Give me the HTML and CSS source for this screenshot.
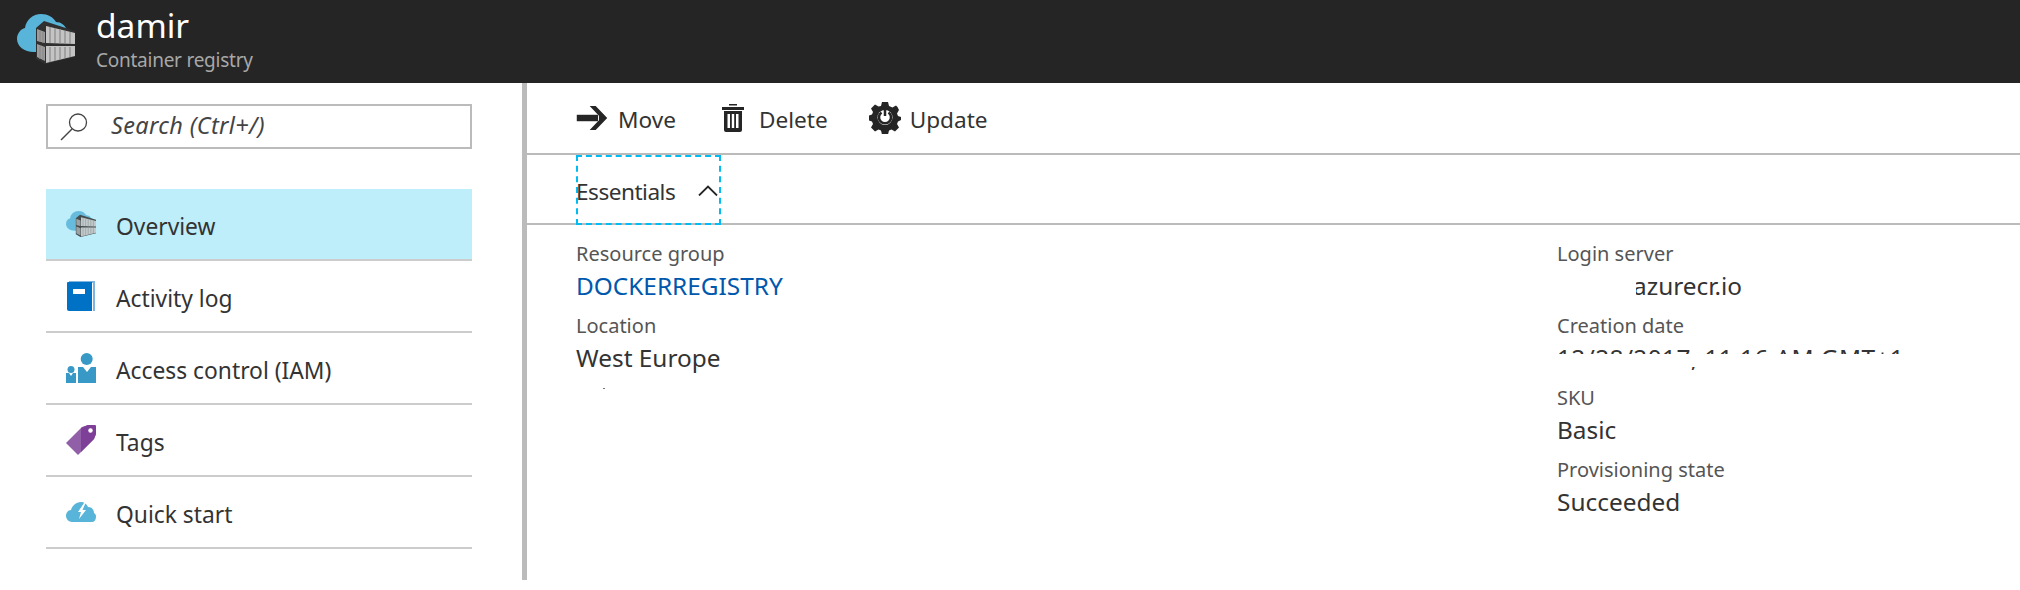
FILE: index.html
```html
<!DOCTYPE html>
<html lang="en">
<head>
<meta charset="utf-8">
<title>damir - Container registry</title>
<link rel="stylesheet" href="styles.css">
</head>
<body>
<svg class="defs" width="0" height="0" aria-hidden="true">
  <defs>
    <symbol id="registry" viewBox="0 0 58 50">
      <path fill="#59b4d9" d="M17 38C7 38 0 32 0 25c0-6 4-10 8-11C9 6 16 0 24 0c7 0 12 3 15 8 5 0 9 3 11 8v22z"/>
      <path fill="#303030" d="M19 14 27 7 58 17V43L28 50 19 45z"/>
      <path fill="#9c9c9c" d="M20 15l8 3v11l-8-2zM20 30l8 3v14l-8-4z"/>
      <path fill="#c4c4c4" d="M29 12l29 7v11l-29-1zM29 32h29v10l-29 7z"/>
      <path fill="none" stroke="#8a8a8a" stroke-width="1.200" d="M33 13v16M38 14v15M43 15v15M48 17v13M53 18v12M33 33v15M38 33v14M43 33v13M48 33v11M53 33v10M23 17v11M26 18v11M23 32v13M26 33v13"/>
    </symbol>
  </defs>
</svg>

<header class="topbar">
  <svg class="brand-icon"><use href="#registry"/></svg>
  <div class="brand-text">
    <h1 class="brand-name">damir</h1>
    <p class="brand-type">Container registry</p>
  </div>
</header>

<div class="shell">
  <nav class="sidebar">
    <div class="search">
      <svg class="search-icon" viewBox="0 0 28 28"><circle cx="18" cy="9.500" r="8.500" fill="none" stroke="#444" stroke-width="1.300"/><path d="M12 16 1 27" fill="none" stroke="#444" stroke-width="1.400"/></svg>
      <span class="search-text">Search (Ctrl+/)</span>
    </div>
    <ul class="menu">
      <li class="menu-item active">
        <span class="menu-icon"><svg class="icon-faded"><use href="#registry"/></svg></span>
        <span class="item-label">Overview</span>
      </li>
      <li class="menu-item">
        <span class="menu-icon"><svg viewBox="0 0 30 30"><path fill="#7fb5e0" d="M3 0h26v30h-2V2H3z"/><path fill="#0072c6" d="M2 1h24v29H3a2 2 0 0 1-2-2V2a1 1 0 0 1 1-1z"/><path fill="#fff" d="M7 8h12v5H7z"/></svg></span>
        <span class="item-label">Activity log</span>
      </li>
      <li class="menu-item">
        <span class="menu-icon"><svg viewBox="0 0 30 30"><g fill="#3999c6"><circle cx="20.700" cy="6" r="6"/><path d="M12 14h5l4 5 4-5h5v16H12z"/><circle cx="5" cy="16.600" r="3.500"/><path d="M0 20h3l2 3 2-3h3v10H0z"/></g></svg></span>
        <span class="item-label">Access control (IAM)</span>
      </li>
      <li class="menu-item">
        <span class="menu-icon"><svg viewBox="0 0 30 30"><path fill="#915fa8" d="M0 18 16 2l6-2h7l1 1v8l-2 5-16 16z"/><path fill="#7e3f98" d="M15 3l7-3h7l1 1v8l-2 5-13 13z"/><circle cx="24.500" cy="5.500" r="2.200" fill="#fff"/></svg></span>
        <span class="item-label">Tags</span>
      </li>
      <li class="menu-item">
        <span class="menu-icon"><svg viewBox="0 0 30 20"><path fill="#59b4d9" d="M6 20a6 6 0 0 1-6-6c0-3 2-6 5-6 1-4 5-8 10-8 3 0 6 2 7 5 4 0 6 3 6 6 2 1 2 3 2 4 0 3-2 5-4 5z"/><path fill="#fff" d="M18 1l-6 9h3l-2 7 7-9h-3.500l3-7z"/></svg></span>
        <span class="item-label">Quick start</span>
      </li>
    </ul>
  </nav>

  <main class="content">
    <div class="commands">
      <button class="command">
        <svg class="cmd-icon cmd-move" viewBox="0 0 33 26"><path fill="#252525" d="M0 9.500h23V16.500H0z"/><path fill="#252525" d="M14 0h6.500L33 13 20.500 26H14l10-10.500V10.500z"/></svg>
        <span class="cmd-label">Move</span>
      </button>
      <button class="command">
        <svg class="cmd-icon cmd-delete" viewBox="0 0 22 28"><path fill="#252525" d="M7 0h8v1.500H7zM0 3h22v3H0zM2 7h18v19a2 2 0 0 1-2 2H4a2 2 0 0 1-2-2z"/><path fill="#fff" d="M5.500 10h2.500v14H5.500zM9.800 10h2.400v14H9.800zM14 10h2.500v14H14z"/></svg>
        <span class="cmd-label">Delete</span>
      </button>
      <button class="command">
        <svg class="cmd-icon cmd-update" viewBox="0 0 32 32"><path fill="#252525" d="M13 0h6l1 4 3.500 1.500L27 3.500 28.500 5 30 8l-2 3.500L29 14l3 1v3l-3 1.500-1 2.500 2 3.500-4 4-3.500-2-2.500 1-1 4h-6l-1-4-2.500-1-3.500 2-4-4 2-3.500-1-2.500-3-1v-5l3-1 1-2.500-2-3.500 4-4 3.500 2L12 4z"/><circle cx="16" cy="15.500" r="7.500" fill="#fff"/><path d="M12.500 10.500a6 6 0 1 0 7 0" fill="none" stroke="#252525" stroke-width="2.500"/><path d="M16 8v6" stroke="#252525" stroke-width="2.500"/></svg>
        <span class="cmd-label">Update</span>
      </button>
    </div>

    <div class="essentials-bar">
      <div class="essentials-toggle">
        <span class="essentials-label">Essentials</span>
        <svg class="chevron" viewBox="0 0 20 11"><path d="M1 10.500 10 1.500l9 9" fill="none" stroke="#252525" stroke-width="1.800"/></svg>
      </div>
    </div>

    <section class="details">
      <div class="col">
        <div class="field">
          <div class="label">Resource group</div>
          <a class="value link">DOCKERREGISTRY</a>
        </div>
        <div class="field">
          <div class="label">Location</div>
          <div class="value">West Europe</div>
        </div>
        <div class="speck"></div>
      </div>
      <div class="col-right">
        <div class="field">
          <div class="label">Login server</div>
          <div class="value masked-server">azurecr.io</div>
        </div>
        <div class="field">
          <div class="label">Creation date</div>
          <div class="value masked-date">12/28/2017, 11:16 AM GMT+1</div>
        </div>
        <div class="field">
          <div class="label">SKU</div>
          <div class="value">Basic</div>
        </div>
        <div class="field">
          <div class="label">Provisioning state</div>
          <div class="value">Succeeded</div>
        </div>
      </div>
    </section>
  </main>
</div>
</body>
</html>
```
FILE: styles.css
```css
* { box-sizing: border-box; }
html, body { margin: 0; height: 590px; overflow: hidden; background: #fff; }
body { font-family: "Noto Sans", "Open Sans", sans-serif; color: #333; }
.defs { position: absolute; }

.topbar { height: 83px; background: #252525; display: flex; align-items: flex-start; padding-left: 17px; }
.brand-icon { width: 58px; height: 50px; margin-top: 14px; flex: none; }
.brand-text { margin-left: 21px; }
.brand-name { margin: 3px 0 0; font-size: 33.500px; line-height: 44px; font-weight: 400; color: #fff; }
.brand-type { margin: 0; font-size: 19px; line-height: 26px; color: #a8a8a8; letter-spacing: -0.25px; }

.shell { display: flex; height: 497px; }
.sidebar { width: 527px; padding: 21px 50px 0 46px; border-right: 5px solid #bbb; flex: none; }
.search { height: 45px; border: 2px solid #bbb; display: flex; align-items: center; padding-left: 12px; }
.search-icon { width: 28px; height: 28px; flex: none; }
.search-text { margin: 0 0 4px 23px; font-size: 23.500px; font-style: italic; color: #444; letter-spacing: 0.35px; }

.menu { list-style: none; margin: 40px 0 0; padding: 0; }
.menu-item { height: 72px; border-bottom: 2px solid #ccc; display: flex; align-items: center; font-size: 22.800px; color: #333; }
.menu-item.active { background: #bdeefa; }
.item-label { margin-top: 5px; }
.menu-icon { width: 30px; height: 30px; margin: 0 20px; display: flex; align-items: center; flex: none; }
.menu-icon svg { width: 30px; height: 100%; display: block; }
.menu-icon .icon-faded { height: 26px; opacity: .85; }

.content { flex: 1; min-width: 0; }
.commands { height: 72px; border-bottom: 2px solid #bbb; display: flex; align-items: center; padding-left: 49px; }
.command { display: flex; align-items: center; height: 40px; padding: 0; border: 0; background: none; font: inherit; font-size: 22.600px; color: #333; }
.cmd-label { margin-top: 2px; }
.cmd-icon { display: block; flex: none; }
.cmd-move { width: 32px; height: 24px; margin-right: 10px; }
.cmd-delete { width: 22px; height: 28px; margin: 0 15px 0 46px; }
.cmd-update { width: 32px; height: 32px; margin: 0 9px 0 41px; }

.essentials-bar { height: 70px; border-bottom: 2px solid #bbb; padding-left: 49px; }
.essentials-toggle { width: 145px; height: 70px; border: 2px dashed #00bcf2; display: flex; align-items: center; font-size: 22.600px; color: #333; letter-spacing: -0.5px; white-space: nowrap; }
.essentials-label { margin: 3px 0 0 -2px; }
.chevron { width: 20px; height: 11px; margin: 0 1px 0 auto; flex: none; }

.details { display: flex; padding: 14px 0 0 49px; }
.col { width: 981px; flex: none; position: relative; }
.col-right { flex: 1; min-width: 0; }
.field { height: 72px; }
.label { font-size: 20px; line-height: 30px; color: #555; }
.value { display: block; font-size: 24.400px; line-height: 34px; color: #333; white-space: nowrap; }
.value.link { color: #0058ad; }
.masked-server { padding-left: 76px; clip-path: inset(0 0 0 79px); }
.masked-date { position: relative; letter-spacing: 0.4px; }
.masked-date::after { content: ""; position: absolute; left: 0; right: 0; top: 13px; height: 13px; background: #fff; }
.speck { position: absolute; left: 27px; top: 149px; width: 2px; height: 1px; background: #777; }
```
